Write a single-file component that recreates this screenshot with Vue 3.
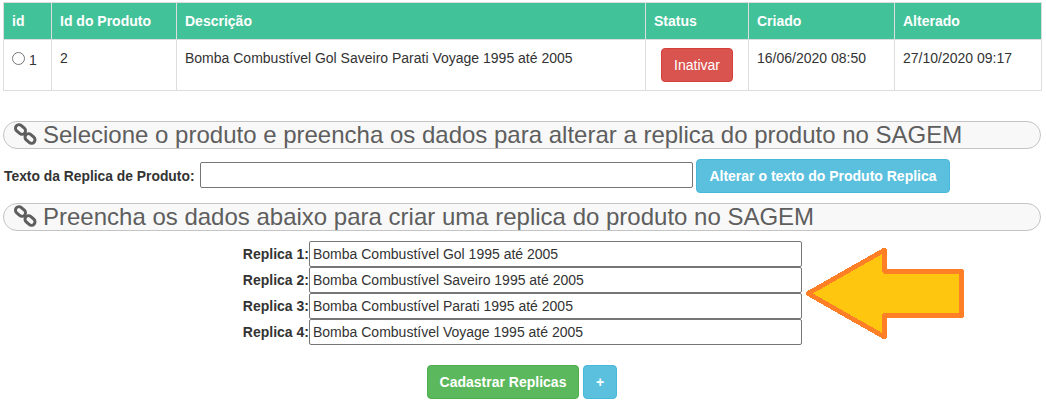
<template>
  <div class="page">
    <table class="grid">
      <colgroup>
        <col style="width: 48px">
        <col style="width: 125px">
        <col style="width: 469px">
        <col style="width: 103px">
        <col style="width: 146px">
        <col style="width: 147px">
      </colgroup>
      <thead>
        <tr>
          <th v-for="col in columns" :key="col">{{ col }}</th>
        </tr>
      </thead>
      <tbody>
        <tr>
          <td class="id-cell"><input type="radio" class="radio"><span class="id-num">1</span></td>
          <td>2</td>
          <td>Bomba Combustível Gol Saveiro Parati Voyage 1995 até 2005</td>
          <td class="status-cell"><button class="btn btn-danger">Inativar</button></td>
          <td>16/06/2020 08:50</td>
          <td>27/10/2020 09:17</td>
        </tr>
      </tbody>
    </table>

    <h3 class="section first">
      <svg class="link-icon" viewBox="0 0 24 24" aria-hidden="true">
        <g fill="none" stroke="#5e5e5e" stroke-width="3">
          <rect x="1" y="3" width="11" height="7" rx="3.5" transform="rotate(42 6.5 6.5)" />
          <rect x="10.5" y="12" width="11" height="7" rx="3.5" transform="rotate(42 16 15.5)" />
        </g>
      </svg>
      Selecione o produto e preencha os dados para alterar a replica do produto no SAGEM
    </h3>

    <div class="text-row">
      <label class="text-label">Texto da Replica de Produto:</label>
      <input type="text" class="field text-field">
      <button class="btn btn-info bold alter-btn">Alterar o texto do Produto Replica</button>
    </div>

    <h3 class="section second">
      <svg class="link-icon" viewBox="0 0 24 24" aria-hidden="true">
        <g fill="none" stroke="#5e5e5e" stroke-width="3">
          <rect x="1" y="3" width="11" height="7" rx="3.5" transform="rotate(42 6.5 6.5)" />
          <rect x="10.5" y="12" width="11" height="7" rx="3.5" transform="rotate(42 16 15.5)" />
        </g>
      </svg>
      Preencha os dados abaixo para criar uma replica do produto no SAGEM
    </h3>

    <div class="replicas">
      <div v-for="(item, i) in replicas" :key="i" class="replica-row">
        <label class="replica-label">Replica {{ i + 1 }}:</label>
        <input type="text" class="field replica-field" :value="item">
      </div>
    </div>

    <div class="actions">
      <button class="btn btn-success bold save-btn">Cadastrar Replicas</button>
      <button class="btn btn-info bold plus">+</button>
    </div>

    <svg class="arrow" width="170" height="100" viewBox="800 245 170 100" aria-hidden="true">
      <polygon
        points="808,293.5 884.5,250 884.5,271.3 961.7,271.3 961.7,315.5 884.5,315.5 884.5,337"
        fill="#ffc60f"
        stroke="#ff7f27"
        stroke-width="4.7"
        stroke-linejoin="round"
        shape-rendering="crispEdges"
      />
    </svg>
  </div>
</template>

<script setup>
const columns = ['id', 'Id do Produto', 'Descrição', 'Status', 'Criado', 'Alterado']

const replicas = [
  'Bomba Combustível Gol 1995 até 2005',
  'Bomba Combustível Saveiro 1995 até 2005',
  'Bomba Combustível Parati 1995 até 2005',
  'Bomba Combustível Voyage 1995 até 2005'
]
</script>

<style>
html,
body {
  margin: 0;
  background: #fff;
}
</style>

<style scoped>
.page {
  position: relative;
  width: 1046px;
  height: 403px;
  overflow: hidden;
  box-sizing: border-box;
  padding: 2px 5px 0 3px;
  font-family: "Liberation Sans", Arial, sans-serif;
  font-size: 14px;
  line-height: 20px;
  color: #333;
}

.grid {
  width: 1038px;
  table-layout: fixed;
  border-collapse: collapse;
  border: 1px solid #ddd;
}

.grid th,
.grid td {
  border: 1px solid #ddd;
  padding: 8px;
  text-align: left;
  vertical-align: top;
}

.grid th {
  height: 20px;
  background: #42c299;
  color: #fff;
  font-weight: bold;
}

.grid td {
  height: 34px;
}

.id-cell {
  white-space: nowrap;
}

.radio {
  width: 13px;
  height: 13px;
  margin: 4px 0 0;
  vertical-align: top;
}

.id-num {
  display: inline-block;
  margin: 2px 0 0 4px;
  vertical-align: top;
}

.status-cell {
  text-align: center !important;
}

.btn {
  display: inline-block;
  box-sizing: border-box;
  height: 34px;
  padding: 6px 12px;
  border: 1px solid transparent;
  border-radius: 4px;
  font-family: inherit;
  font-size: 14px;
  line-height: 20px;
  color: #fff;
}

.bold {
  font-weight: bold;
}

.btn-danger {
  background: #d9534f;
  border-color: #d43f3a;
}

.btn-info {
  background: #5bc0de;
  border-color: #46b8da;
}

.btn-success {
  background: #5cb85c;
  border-color: #4cae4c;
}

.section {
  display: flex;
  align-items: center;
  gap: 5px;
  box-sizing: border-box;
  height: 28px;
  margin: 0;
  padding: 0 10px;
  border: 1px solid #c4c4c4;
  border-radius: 14px;
  background: #f8f8f8;
  font-size: 24px;
  font-weight: normal;
  line-height: 26px;
  color: #5e5e5e;
  white-space: nowrap;
}

.section.first {
  margin-top: 30px;
}

.link-icon {
  flex: none;
  width: 24px;
  height: 24px;
}

.text-row {
  display: flex;
  align-items: center;
  height: 34px;
  margin-top: 10px;
  margin-left: 1px;
}

.text-label {
  width: 196px;
  flex: none;
  font-size: 13.85px;
  font-weight: bold;
  white-space: nowrap;
}

.field {
  box-sizing: border-box;
  width: 493px;
  height: 26px;
  margin: 0;
  padding: 1px 3px;
  border: 1px solid #767676;
  border-radius: 2px;
  background: #fff;
  font-family: inherit;
  font-size: 14px;
  color: #333;
  outline: none;
}

.text-field {
  margin-bottom: 2px;
}

.alter-btn {
  margin-left: 3px;
  width: 254px;
  padding: 6px 0;
}

.section.second {
  margin-top: 10px;
}

.replicas {
  display: flex;
  flex-direction: column;
  margin-top: 10px;
  margin-left: 239px;
}

.replica-row {
  display: flex;
  align-items: center;
  height: 26px;
}

.replica-label {
  width: 67px;
  flex: none;
  font-weight: bold;
  text-align: right;
  white-space: nowrap;
}

.actions {
  display: flex;
  justify-content: center;
  gap: 4px;
  margin-top: 20px;
}

.save-btn {
  width: 152px;
  padding: 6px 0;
}

.plus {
  width: 34px;
  padding: 6px 0;
}

.arrow {
  position: absolute;
  left: 800px;
  top: 245px;
}
</style>
